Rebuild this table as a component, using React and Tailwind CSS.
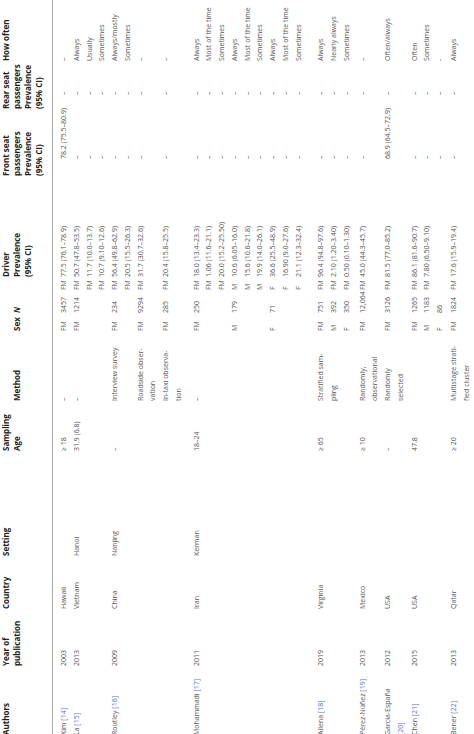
import React from 'react';

// the page shows a table turned a quarter to the left; it is laid out upright here and rotated as a whole
const COLS = 'grid grid-cols-[69px_57px_53px_105px_50px_70px_18px_23px_13px_101px_67px_48px_80px]';

const HEAD = [
  ['Authors'],
  ['Year of', 'publication'],
  ['Country'],
  ['Setting'],
  ['Sampling', 'Age'],
  ['', 'Method'],
  ['', 'Sex'],
  ['', 'N'],
  [],
  ['Driver', 'Prevalence', '(95% CI)'],
  ['Front seat', 'passengers', 'Prevalence', '(95% CI)'],
  ['Rear seat', 'passengers', 'Prevalence', '(95% CI)'],
  ['How often']
];

// data in the two passenger columns sits a little right of their headings
const CELL_PAD = { 10: 'pl-[17px]', 11: 'pl-[14px]' };

// one entry per group: extra top gap, then the printed lines (13 cells each)
const GROUPS = [
  { gap: 'mt-0', lines: [
    [['Kim', '14'], '2003', 'Hawaii', '', '≥ 18', '–', 'FM', '3457', 'FM', '77.5 (76.1–78.9)', '78.2 (75.5–80.9)', '–', '–']
  ] },
  { gap: 'mt-0', lines: [
    [['La', '15'], '2013', 'Vietnam', 'Hanoi', '31.9 (6.8)', '–', 'FM', '1214', 'FM', '50.7 (47.8–53.5)', '–', '–', 'Always'],
    ['', '', '', '', '', '', '', '', 'FM', '11.7 (10.0–13.7)', '–', '–', 'Usually'],
    ['', '', '', '', '', '', '', '', 'FM', '10.7 (9.10–12.6)', '–', '–', 'Sometimes']
  ] },
  { gap: 'mt-0', lines: [
    [['Routley', '16'], '2009', 'China', 'Nanjing', '–', 'Interview survey', 'FM', '234', 'FM', '56.4 (49.8–62.9)', '–', '–', 'Always/mostly'],
    ['', '', '', '', '', '', '', '', 'FM', '20.5 (15.5–26.3)', '–', '–', 'Sometimes'],
    ['', '', '', '', '', 'Roadside obser-', 'FM', '9294', 'FM', '31.7 (30.7–32.6)', '–', '–', '–'],
    ['', '', '', '', '', 'vation', '', '', '', '', '', '', ''],
    ['', '', '', '', '', 'In-taxi observa-', 'FM', '285', 'FM', '20.4 (15.8–25.5)', '–', '–', '–'],
    ['', '', '', '', '', 'tion', '', '', '', '', '', '', '']
  ] },
  { gap: 'mt-[5px]', lines: [
    [['Mohammadi', '17'], '2011', 'Iran', 'Kerman', '18–24', '–', 'FM', '250', 'FM', '18.0 (13.4–23.3)', '–', '–', 'Always'],
    ['', '', '', '', '', '', '', '', 'FM', '1.06 (11.6–21.1)', '–', '–', 'Most of the time'],
    ['', '', '', '', '', '', '', '', 'FM', '20.0 (15.2–25.50)', '–', '–', 'Sometimes'],
    ['', '', '', '', '', '', 'M', '179', 'M', '10.6 (6.05–16.0)', '–', '–', 'Always'],
    ['', '', '', '', '', '', '', '', 'M', '15.6 (10.6–21.8)', '–', '–', 'Most of the time'],
    ['', '', '', '', '', '', '', '', 'M', '19.9 (14.0–26.1)', '–', '–', 'Sometimes'],
    ['', '', '', '', '', '', 'F', '71', 'F', '36.6 (25.5–48.9)', '–', '–', 'Always'],
    ['', '', '', '', '', '', '', '', 'F', '16.90 (9.0–27.6)', '–', '–', 'Most of the time'],
    ['', '', '', '', '', '', '', '', 'F', '21.1 (12.3–32.4)', '–', '–', 'Sometimes']
  ] },
  { gap: 'mt-[10px]', lines: [
    [['Allena', '18'], '2019', 'Virginia', '', '≥ 65', 'Stratified sam-', 'FM', '751', 'FM', '96.4 (94.8–97.6)', '–', '–', 'Always'],
    ['', '', '', '', '', 'pling', 'M', '392', 'FM', '2.10 (1.20–3.40)', '–', '–', 'Nearly always'],
    ['', '', '', '', '', '', 'F', '350', 'FM', '0.50 (0.10–1.30)', '–', '–', 'Sometimes']
  ] },
  { gap: 'mt-[3px]', lines: [
    [['Pérez-Núñez', '19'], '2013', 'Mexico', '', '≥ 10', 'Randomly,', 'FM', '12,064', 'FM', '45.0 (44.3–45.7)', '–', '–', '–'],
    ['', '', '', '', '', 'observational', '', '', '', '', '', '', '']
  ] },
  { gap: 'mt-0', lines: [
    [['García-España', ''], '2012', 'USA', '', '–', 'Randomly', 'FM', '3126', 'FM', '81.5 (77.0–85.2)', '68.9 (64.5–72.9)', '–', 'Often/always'],
    [['', '20'], '', '', '', '', 'selected', '', '', '', '', '', '', '']
  ] },
  { gap: 'mt-px', lines: [
    [['Chen', '21'], '2015', 'USA', '', '47.8', '', 'FM', '1265', 'FM', '86.1 (81.6–90.7)', '–', '–', 'Often'],
    ['', '', '', '', '', '', 'M', '1183', 'FM', '7.80 (6.50–9.10)', '–', '–', 'Sometimes'],
    ['', '', '', '', '', '', 'F', '86', '', '', '–', '–', '-']
  ] },
  { gap: 'mt-px', lines: [
    [['Bener', '22'], '2013', 'Qatar', '', '≥ 20', 'Multistage strati-', 'FM', '1824', 'FM', '17.6 (15.9–19.4)', '–', '–', 'Always'],
    ['', '', '', '', '', 'fied cluster', '', '', '', '', '', '', '']
  ] }
];

function Author({ value }) {
  const [name, ref] = value;
  return (
    <span>
      {name}
      {name && ref ? ' ' : ''}
      {ref && <span className="text-[#5a6fd6]">[{ref}]</span>}
    </span>
  );
}

function Line({ cells, gap }) {
  return (
    <div className={`${COLS} h-[12.75px] leading-[12.75px] ${gap}`}>
      {cells.map((cell, i) => (
        <div key={i} className={`whitespace-nowrap ${CELL_PAD[i] || ''}`}>
          {Array.isArray(cell) ? <Author value={cell} /> : cell}
        </div>
      ))}
    </div>
  );
}

export default function App() {
  return (
    <div className="w-[474px] h-[734px] overflow-hidden bg-white">
      <div className="w-[760px] h-[474px] origin-top-left -rotate-90 translate-y-[734px] font-['Open_Sans',sans-serif]">
        <div className="ml-[-1px]">
          <div className={`${COLS} h-[53px] border-b border-[#a6a6a6] text-[8px] leading-[11px] font-bold text-[#231f20]`}>
            {HEAD.map((lines, i) => (
              <div key={i} className="flex flex-col">
                {lines.map((t, j) => (
                  <div key={j} className={`h-[11px] whitespace-nowrap ${t === 'N' ? 'italic' : ''}`}>{t}</div>
                ))}
              </div>
            ))}
          </div>
          <div className="pt-[5px] text-[7px] text-[#555]">
            {GROUPS.map((g, gi) => (
              <div key={gi}>
                {g.lines.map((cells, li) => (
                  <Line key={li} cells={cells} gap={li === 0 ? g.gap : ''} />
                ))}
              </div>
            ))}
          </div>
        </div>
      </div>
    </div>
  );
}
